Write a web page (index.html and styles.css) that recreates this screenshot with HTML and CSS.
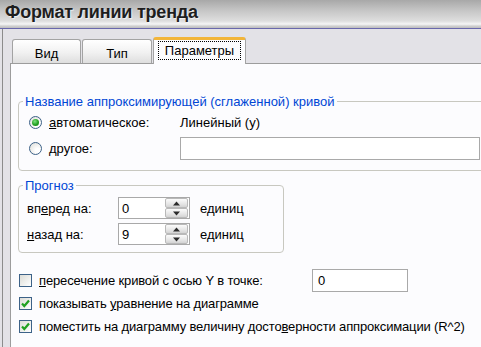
FILE: index.html
```html
<!DOCTYPE html>
<html lang="ru">
<head>
    <meta charset="UTF-8">
    <title>Формат линии тренда</title>
    <link rel="stylesheet" href="styles.css">
</head>
<body>
    <div class="titlebar"><span class="title">Формат линии тренда</span></div>

    <div class="dialog">
        <div class="tabs">
            <div class="tab tab-view">Вид</div>
            <div class="tab tab-type">Тип</div>
            <div class="tab active"><span class="focus">Параметры</span></div>
        </div>

        <div class="panel">
            <fieldset class="group group-name">
                <legend>Название аппроксимирующей (сглаженной) кривой</legend>
                <div class="name-grid">
                    <div class="option"><span class="radio checked"></span><span><u>а</u>втоматическое:</span></div>
                    <span class="auto-name">Линейный (y)</span>
                    <div class="option"><span class="radio"></span><span><u>д</u>ругое:</span></div>
                    <span class="textbox textbox-name"></span>
                </div>
            </fieldset>

            <fieldset class="group group-forecast">
                <legend>Прогноз</legend>
                <div class="forecast-grid">
                    <span>вп<u>е</u>ред на:</span>
                    <span class="spin">
                        <span class="spin-value">0</span>
                        <span class="spin-buttons">
                            <span class="spin-btn"><svg width="9" height="5" viewBox="0 0 9 5"><path d="M4.5 0.5 L8 4.5 L1 4.5 Z" fill="#2b2b2b"/></svg></span>
                            <span class="spin-btn"><svg width="9" height="5" viewBox="0 0 9 5"><path d="M1 0.5 L8 0.5 L4.5 4.5 Z" fill="#2b2b2b"/></svg></span>
                        </span>
                    </span>
                    <span class="unit">единиц</span>

                    <span><u>н</u>азад на:</span>
                    <span class="spin">
                        <span class="spin-value">9</span>
                        <span class="spin-buttons">
                            <span class="spin-btn"><svg width="9" height="5" viewBox="0 0 9 5"><path d="M4.5 0.5 L8 4.5 L1 4.5 Z" fill="#2b2b2b"/></svg></span>
                            <span class="spin-btn"><svg width="9" height="5" viewBox="0 0 9 5"><path d="M1 0.5 L8 0.5 L4.5 4.5 Z" fill="#2b2b2b"/></svg></span>
                        </span>
                    </span>
                    <span class="unit">единиц</span>
                </div>
            </fieldset>

            <div class="checks">
                <div class="check-row">
                    <span class="checkbox"></span>
                    <span class="check-label intercept-label"><u>п</u>ересечение кривой с осью Y в точке:</span>
                    <span class="textbox textbox-intercept">0</span>
                </div>
                <div class="check-row">
                    <span class="checkbox checked"><svg width="11" height="11" viewBox="0 0 11 11"><path d="M2 5.5 L4.3 8 L9 2.5" fill="none" stroke="#21a121" stroke-width="2.2"/></svg></span>
                    <span class="check-label">показывать <u>у</u>равнение на диаграмме</span>
                </div>
                <div class="check-row">
                    <span class="checkbox checked"><svg width="11" height="11" viewBox="0 0 11 11"><path d="M2 5.5 L4.3 8 L9 2.5" fill="none" stroke="#21a121" stroke-width="2.2"/></svg></span>
                    <span class="check-label">поместить на диаграмму величину досто<u>в</u>ерности аппроксимации (R^2)</span>
                </div>
            </div>
        </div>
    </div>
</body>
</html>
```

FILE: styles.css
```css
body {
    margin: 0;
    width: 481px;
    height: 347px;
    overflow: hidden;
    background-color: #e3e2e7;
    font-family: "Liberation Sans", Arial, sans-serif;
    font-size: 13px;
    line-height: 15px;
    color: #000;
}
.titlebar {
    height: 29px;
    box-sizing: border-box;
    padding: 0 0 3px 5px;
    display: flex;
    align-items: center;
    background: linear-gradient(#a8a8a8 0%, #c4c4c4 35%, #dedede 75%, #f6f6f6 86%, #d0d0d0 93%, #bdbdbd 100%);
    border-bottom: 1px solid #6a68ac;
}
.title {
    font-size: 18px;
    font-weight: bold;
    color: #1e1e1e;
    letter-spacing: -0.2px;
    text-shadow: 1px 1px 1px rgba(255,255,255,0.7);
}
.dialog {
    box-sizing: border-box;
    margin-left: 2px;
    border-left: 1px solid #8c8c8c;
    padding: 8px 0 0 7px;
    height: 318px;
}
.tabs {
    display: flex;
    align-items: flex-start;
    gap: 1px;
    padding-left: 2px;
    height: 26px;
    position: relative;
    z-index: 1;
}
.tab {
    box-sizing: border-box;
    margin-top: 2px;
    height: 24px;
    padding-top: 6px;
    text-align: center;
    border: 1px solid #a3a3a3;
    border-bottom: none;
    border-radius: 3px 3px 0 0;
    background: linear-gradient(#ffffff, #f1f1f1 55%, #dedede);
}
.tab-view {
    width: 69px;
}
.tab-type {
    width: 70px;
}
.tab.active {
    width: 93px;
    height: 27px;
    margin-top: 0;
    padding-top: 1px;
    border-top: 3px solid #f2b53a;
    background: #fcfcfe;
    display: flex;
    justify-content: center;
}
.focus {
    box-sizing: border-box;
    width: 83px;
    height: 19px;
    line-height: 17px;
    border: 1px dotted #000;
    text-align: center;
}
.panel {
    height: 284px;
    box-sizing: border-box;
    border: 1px solid #9c9c9c;
    border-right: none;
    border-bottom: none;
    background-color: #fcfcfe;
    padding: 30px 0 0 7px;
}
.group {
    margin: 0;
    border: 1px solid #c8c8c0;
    border-radius: 4px;
    padding: 0 0 10px 4px;
}
.group legend {
    padding: 0 2px;
    color: #0046d5;
    line-height: 15px;
}
.group-name {
    width: 480px;
}
.name-grid {
    display: grid;
    grid-template-columns: 151px 1fr;
    grid-template-rows: 22px 23px;
    row-gap: 4px;
    align-items: center;
    margin-left: 6px;
    padding-top: 2px;
}
.option {
    display: flex;
    align-items: center;
    gap: 7px;
}
.radio {
    box-sizing: border-box;
    width: 13px;
    height: 13px;
    border-radius: 50%;
    border: 1px solid #3d6288;
    background: radial-gradient(circle at 70% 70%, #ffffff 20%, #dcdcd6 100%);
    display: flex;
    align-items: center;
    justify-content: center;
}
.radio.checked::after {
    content: "";
    width: 7px;
    height: 7px;
    border-radius: 50%;
    background: radial-gradient(circle at 40% 35%, #7ee07e 0%, #21a121 55%, #0f7a0f 100%);
}
.textbox {
    box-sizing: border-box;
    height: 23px;
    border: 1px solid #a9a9a9;
    background-color: #fff;
    padding: 3px 5px;
}
.textbox-name {
    width: 300px;
}
.group-forecast {
    box-sizing: border-box;
    width: 266px;
    margin-top: 7px;
    padding-bottom: 7px;
}
.forecast-grid {
    display: grid;
    grid-template-columns: 91px 72px auto;
    grid-template-rows: 22px 22px;
    row-gap: 4px;
    align-items: center;
    margin-left: 4px;
    padding-top: 4px;
}
.unit {
    margin-left: 10px;
}
.spin {
    box-sizing: border-box;
    width: 72px;
    height: 22px;
    border: 1px solid #a9a9a9;
    background-color: #fff;
    display: flex;
    justify-content: space-between;
}
.spin-value {
    padding: 3px 0 0 3px;
}
.spin-buttons {
    display: flex;
    flex-direction: column;
    width: 23px;
    margin-right: 1px;
}
.spin-btn {
    box-sizing: border-box;
    height: 10px;
    border: 1px solid #b9b9b9;
    border-radius: 2px;
    background: linear-gradient(#fbfbfb, #e6e6e6 60%, #d4d4d4);
    display: flex;
    align-items: center;
    justify-content: center;
}
.checks {
    margin-top: 16px;
    padding-left: 1px;
}
.check-row {
    height: 23px;
    display: flex;
    align-items: center;
}
.checkbox {
    box-sizing: border-box;
    width: 13px;
    height: 13px;
    border: 1px solid #3d6288;
    background: linear-gradient(135deg, #dcdcd6, #ffffff);
    display: flex;
    align-items: center;
    justify-content: center;
}
.check-label {
    margin-left: 7px;
    letter-spacing: -0.15px;
}
.intercept-label {
    width: 273px;
}
.textbox-intercept {
    width: 96px;
}
```
